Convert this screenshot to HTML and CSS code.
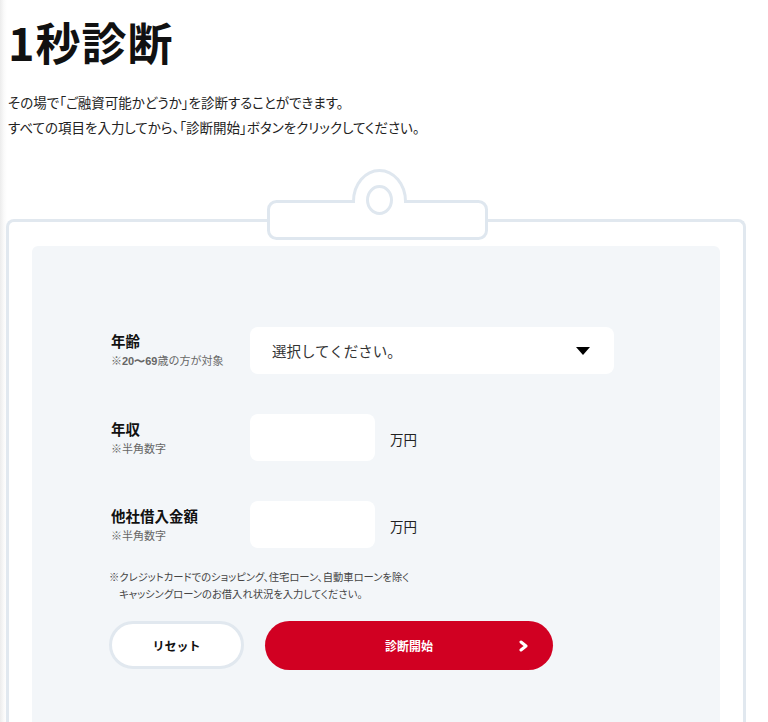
FILE: index.html
```html
<!DOCTYPE html>
<html lang="ja">
<head>
  <meta charset="UTF-8">
  <meta name="viewport" content="width=device-width, initial-scale=1.0">
  <title>1秒診断</title>
  <link rel="stylesheet" href="styles.css">
</head>
<body>
  <main class="page">
    <!-- Intro -->
    <h1 class="title">1秒診断</h1>
    <p class="lead">
      その場で「ご融資可能かどうか」を診断することができます。<br>
      すべての項目を入力してから、「診断開始」ボタンをクリックしてください。
    </p>

    <!-- Clipboard -->
    <section class="clipboard">
      <svg class="clip" width="226" height="76" viewBox="0 0 226 76">
        <path d="M11.5 34.5 H88.5 A26 31 0 0 1 140.5 34.5 H213.5 A8 8 0 0 1 221.5 42.5 V63.5 A8 8 0 0 1 213.5 71.5 H11.5 A8 8 0 0 1 3.5 63.5 V42.5 A8 8 0 0 1 11.5 34.5 Z" fill="#fff" stroke="#dfe7ef" stroke-width="3"/>
        <ellipse cx="114.5" cy="33" rx="12" ry="13.5" fill="none" stroke="#dfe7ef" stroke-width="3"/>
      </svg>

      <div class="panel">
        <form class="form">
          <div class="row">
            <div class="label">
              <span class="name">年齢</span>
              <span class="hint">※<b>20〜69</b>歳の方が対象</span>
            </div>
            <div class="select">
              <span>選択してください。</span>
              <span class="arrow"></span>
            </div>
          </div>

          <div class="row">
            <div class="label">
              <span class="name">年収</span>
              <span class="hint">※半角数字</span>
            </div>
            <div class="input"></div>
            <span class="unit">万円</span>
          </div>

          <div class="row">
            <div class="label">
              <span class="name">他社借入金額</span>
              <span class="hint">※半角数字</span>
            </div>
            <div class="input"></div>
            <span class="unit">万円</span>
          </div>

          <p class="note">
            ※クレジットカードでのショッピング、住宅ローン、自動車ローンを除く<br>
            キャッシングローンのお借入れ状況を入力してください。
          </p>

          <div class="buttons">
            <button type="button" class="btn reset">リセット</button>
            <button type="button" class="btn start">
              診断開始
              <svg class="chevron" width="10" height="12" viewBox="0 0 10 12">
                <polyline points="2,2 7,6 2,10" fill="none" stroke="#fff" stroke-width="3" stroke-linecap="round" stroke-linejoin="round"/>
              </svg>
            </button>
          </div>
        </form>
      </div>
    </section>
  </main>
</body>
</html>
```

FILE: styles.css
```css
* {
  margin: 0;
  padding: 0;
  box-sizing: border-box;
}

body {
  font-family: "Noto Sans CJK JP", "Noto Sans", sans-serif;
  color: #222;
  background: linear-gradient(90deg, #ececec 0, #fafafa 4px, #fff 7px);
  overflow: hidden;
}

.page {
  padding-left: 8px;
}

/* Intro */
.title {
  font-size: 45px;
  font-weight: 700;
  line-height: 54px;
  margin-top: 15px;
  color: #111;
  letter-spacing: 1px;
}
.lead {
  margin-top: 21px;
  font-size: 13.5px;
  line-height: 25px;
  font-feature-settings: "palt";
}

/* Clipboard */
.clipboard {
  position: relative;
  margin: 79px 0 0 -2px;
  width: 740px;
  height: 620px;
  border: 3px solid #e1e8ef;
  border-bottom: none;
  border-radius: 8px 8px 0 0;
  padding: 24px 23px 0;
  background: #fff;
}
.clip {
  position: absolute;
  top: -55px;
  left: 256px;
}

.panel {
  background: #f3f6f9;
  border-radius: 6px;
  height: 100%;
  padding: 81px 0 0 79px;
}

.row {
  display: flex;
  align-items: center;
  margin-bottom: 40px;
}
.label {
  width: 139px;
  display: flex;
  flex-direction: column;
}
.name {
  font-size: 14.5px;
  font-weight: 700;
  line-height: 20px;
  color: #111;
}
.hint {
  font-size: 11px;
  line-height: 18px;
  color: #666;
}
.hint b {
  font-family: "Liberation Sans", sans-serif;
  font-weight: 700;
}

.select {
  width: 364px;
  height: 47px;
  background: #fff;
  border-radius: 8px;
  display: flex;
  align-items: center;
  justify-content: space-between;
  padding: 0 24px 0 22px;
  font-size: 14.5px;
  color: #333;
}
.arrow {
  width: 0;
  height: 0;
  border-left: 7px solid transparent;
  border-right: 7px solid transparent;
  border-top: 8px solid #000;
}

.input {
  width: 125px;
  height: 47px;
  background: #fff;
  border-radius: 8px;
}
.unit {
  margin-left: 15px;
  font-size: 13.5px;
  color: #222;
  margin-top: 2px;
}

.note {
  margin: -20px 0 0 -2px;
  font-size: 10.3px;
  line-height: 17px;
  color: #444;
  padding-left: 10px;
  text-indent: -10px;
  font-feature-settings: "palt";
}

.buttons {
  display: flex;
  gap: 21px;
  margin: 19px 0 0 -2px;
}
.btn {
  font-family: inherit;
  font-size: 12px;
  font-weight: 700;
  border-radius: 25px;
  cursor: pointer;
}
.reset {
  width: 135px;
  height: 48px;
  background: #fff;
  border: 3px solid #e1e8ef;
  color: #111;
}
.start {
  position: relative;
  width: 288px;
  height: 49px;
  background: #d10022;
  border: none;
  color: #fff;
}
.chevron {
  position: absolute;
  right: 24px;
  top: 19px;
}
```
